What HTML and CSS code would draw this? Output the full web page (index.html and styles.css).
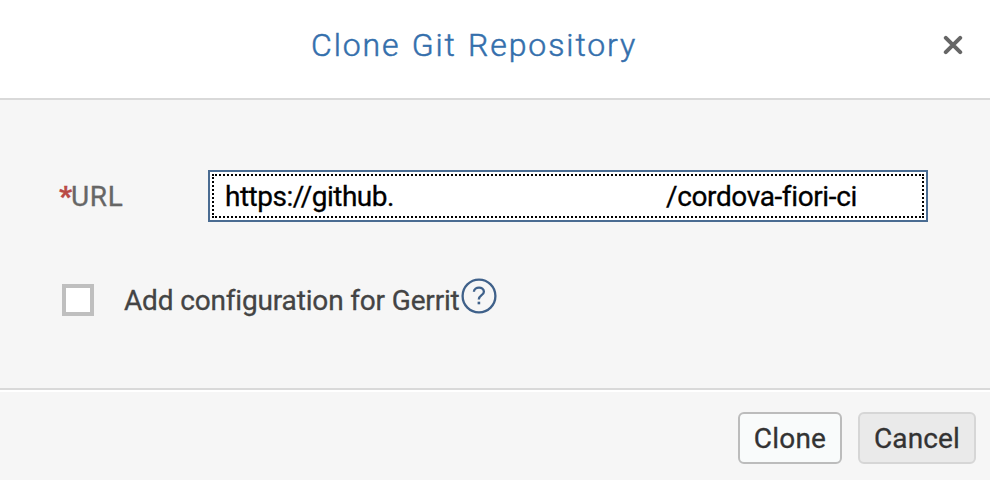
FILE: index.html
```html
<!DOCTYPE html>
<html lang="en">
<head>
<meta charset="utf-8">
<title>Clone Git Repository</title>
<link rel="stylesheet" href="styles.css">
</head>
<body>
<div class="dialog">
  <header class="header">
    <h1 class="title">Clone Git Repository</h1>
    <button class="close" aria-label="Close">
      <svg width="20" height="20" viewBox="0 0 20 20"><path d="M2.8 2.8 17.2 17.2M17.2 2.8 2.8 17.2"/></svg>
    </button>
  </header>
  <main class="content">
    <div class="row url-row">
      <span class="label"><span class="required">*</span><span class="label-text">URL</span></span>
      <div class="field"><div class="focus"><span class="host">https://github.</span><span class="path">/cordova-fiori-ci</span></div></div>
    </div>
    <div class="row gerrit-row">
      <span class="checkbox"></span>
      <span class="check-label">Add configuration for Gerrit</span>
      <svg class="help" width="36" height="36" viewBox="0 0 36 36"><circle cx="18" cy="18" r="16.4"/><path d="M12.9 13.8C13.2 8.3 22.9 8.2 22.9 13.7C22.9 17.3 17.8 17 17.8 21.5"/><path class="dot" d="M16.6 23.7h2.6v2.6h-2.6z"/></svg>
    </div>
  </main>
  <footer class="footer">
    <button class="button clone">Clone</button>
    <button class="button cancel">Cancel</button>
  </footer>
</div>
</body>
</html>
```
FILE: styles.css
```css
* { box-sizing: border-box; }
body { margin: 0; font-family: Roboto, sans-serif; font-size: 28px; -webkit-text-stroke-width: 0.3px; }
button { font: inherit; margin: 0; padding: 0; }
.dialog { width: 990px; height: 480px; display: flex; flex-direction: column; background: #f6f6f6; overflow: hidden; }
.header { height: 100px; flex: none; display: flex; align-items: center; background: #fff; border-bottom: 2px solid #d9d9d9; padding: 0 27px 8px 311px; }
.title { margin: 0; font-size: 32px; line-height: 40px; font-weight: 300; letter-spacing: 1.9px; word-spacing: 1.5px; color: #346fac; white-space: nowrap; -webkit-text-stroke-width: 0.5px; }
.close { margin-left: auto; width: 20px; height: 20px; border: 0; background: none; }
.close svg { display: block; fill: none; stroke: #666; stroke-width: 4; stroke-linecap: round; }
.content { height: 290px; flex: none; padding: 70px 62px 0 60px; border-bottom: 2px solid #d9d9d9; }
.row { display: flex; align-items: center; white-space: nowrap; }
.url-row { height: 52px; }
.label { width: 148px; color: #666; display: flex; }
.label-text { letter-spacing: 0.7px; }
.required { color: #b94b46; font-weight: 900; width: 11px; margin-left: -1px; margin-right: 1px; }
.field { width: 720px; height: 52px; background: #fff; border: 2px solid #4a6c92; padding: 2px; }
.focus { height: 44px; border: 2px dotted #000; display: flex; align-items: center; padding-left: 11px; color: #000; }
.host { width: 441px; letter-spacing: -0.5px; }
.path { letter-spacing: -0.38px; }
.gerrit-row { margin-top: 52px; height: 52px; padding-left: 2px; }
.checkbox { width: 32px; height: 32px; border: 4px solid #bfbfbf; background: #fff; margin-right: 30px; }
.check-label { width: 337px; color: #444; letter-spacing: -0.16px; }
.help { flex: none; margin-top: -8px; fill: none; stroke: #3f618a; stroke-width: 2.3; }
.help .dot { fill: #3f618a; stroke: none; }
.footer { flex: 1; display: flex; justify-content: flex-end; gap: 16px; padding: 20px 14px 0 0; border-top: 2px solid #fff; }
.button { height: 52px; border-radius: 6px; color: #333; -webkit-text-stroke-width: 0.3px; }
.clone { width: 104px; background: #f9fbfb; border: 2px solid #bcbcbc; letter-spacing: 0.2px; }
.cancel { width: 118px; background: #eaeaea; border: 2px solid #d6d6d6; letter-spacing: 0.15px; }
```
